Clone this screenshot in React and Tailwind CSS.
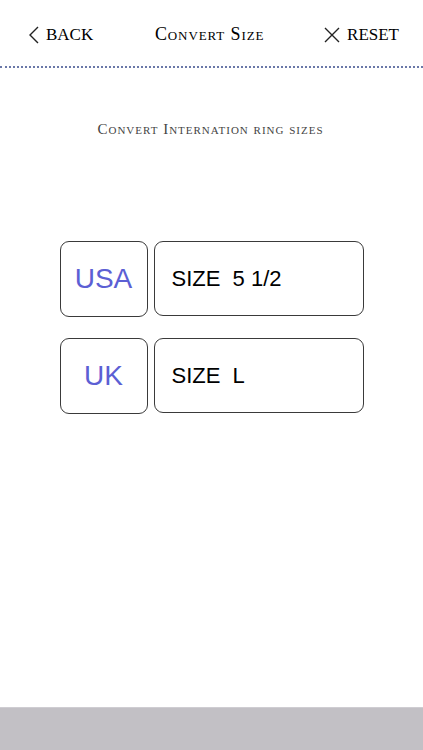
import React from "react";

function Row(props) {
  return (
    <div className="flex flex-row gap-[6px]">
      <div className="w-[88px] h-[76px] flex items-center justify-center border border-[#3a3a3a] rounded-[9px] text-[28px] text-[#5c5fd4] font-['Liberation_Sans',sans-serif]">
        {props.country}
      </div>
      <div className="w-[210px] h-[75px] flex items-center pl-[17px] border border-[#3a3a3a] rounded-[9px] text-[22px] text-black font-['Liberation_Sans',sans-serif] whitespace-pre">
        {props.size}
      </div>
    </div>
  );
}

export default function App() {
  return (
    <div className="w-[423px] h-[750px] flex flex-col bg-white font-['Liberation_Serif',serif]">
      <div className="h-[66px] flex flex-row items-center justify-between pl-[28px] pr-[24px] pt-[3px] text-[17px] text-black">
        <div className="flex flex-row items-center gap-[6px]">
          <svg width="12" height="18" viewBox="0 0 12 18" fill="none" stroke="#222" strokeWidth="1.4">
            <path d="M10 1 L2 9 L10 17" />
          </svg>
          <span>BACK</span>
        </div>
        <span className="[font-variant:small-caps] text-[18px] tracking-[0.9px] ml-[2px]">Convert Size</span>
        <div className="flex flex-row items-center gap-[7px]">
          <svg width="16" height="16" viewBox="0 0 16 16" fill="none" stroke="#222" strokeWidth="1.4">
            <path d="M1 1 L15 15 M15 1 L1 15" />
          </svg>
          <span>RESET</span>
        </div>
      </div>
      <div className="h-[2px] border-t-2 border-dotted border-[#6a78a8]"></div>
      <div className="flex-1 flex flex-col items-center">
        <p className="mt-[50px] [font-variant:small-caps] text-[15px] text-[#444] tracking-[1px] ml-[-2px]">
          Convert Internation ring sizes
        </p>
        <div className="mt-[100px] flex flex-col gap-[21px]">
          <Row country="USA" size="SIZE  5 1/2" />
          <Row country="UK" size="SIZE  L" />
        </div>
      </div>
      <div className="h-[43px] bg-[#c2c0c5] border-t border-[#cfcdd2]"></div>
    </div>
  );
}
